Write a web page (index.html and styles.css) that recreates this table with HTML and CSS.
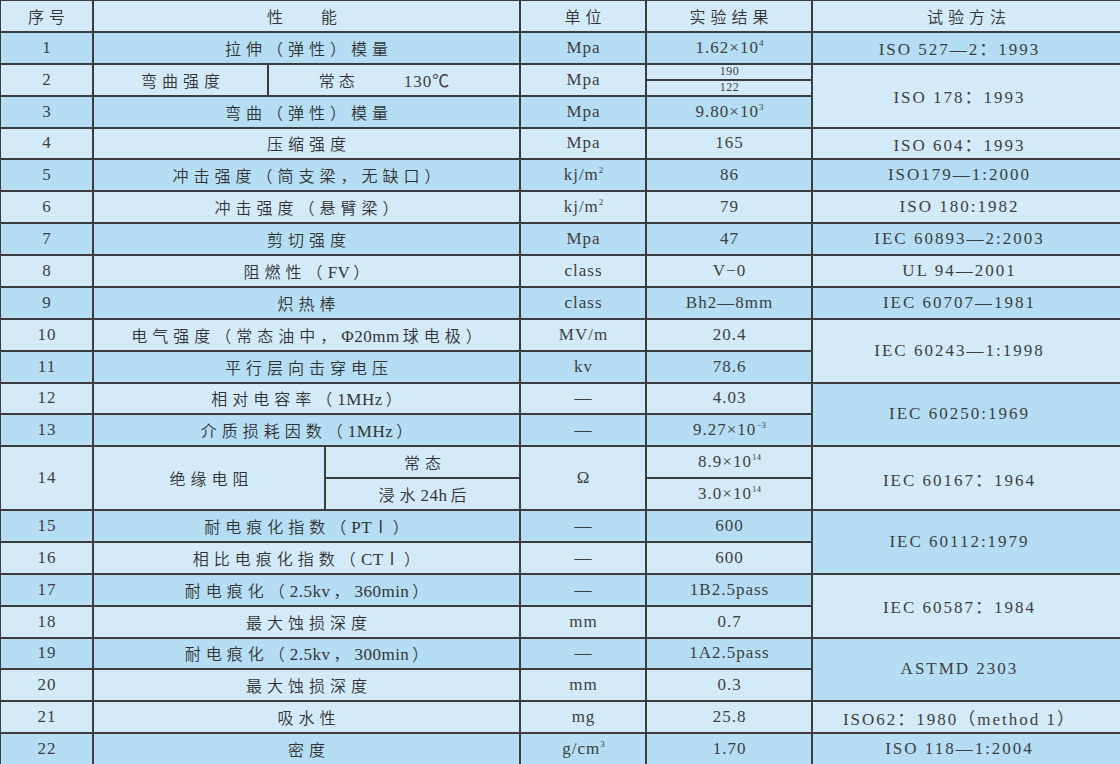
FILE: index.html
```html
<!DOCTYPE html>
<html lang="zh-CN">
<head>
<meta charset="utf-8">
<title>性能表</title>
<link rel="stylesheet" href="styles.css">
</head>
<body>
<div class="sheet">
  <!-- header -->
  <div class="cn">序号</div>
  <div class="cn c3 wide">性　　能</div>
  <div class="cn">单位</div>
  <div class="cn">实验结果</div>
  <div class="cn">试验方法</div>

  <!-- 1 -->
  <div class="d">1</div>
  <div class="d cn c3">拉伸（弹性）模量</div>
  <div class="d">Mpa</div>
  <div class="d"><span>1.62×10<sup>4</sup></span></div>
  <div class="d m">ISO 527—2：1993</div>

  <!-- 2 -->
  <div>2</div>
  <div class="cn">弯曲强度</div>
  <div class="c2 pair"><span class="cn">常态</span><span>130℃</span></div>
  <div>Mpa</div>
  <div class="half">190</div>
  <div class="r4 m">ISO 178：1993</div>
  <div class="half">122</div>

  <!-- 3 -->
  <div class="d">3</div>
  <div class="d cn c3">弯曲（弹性）模量</div>
  <div class="d">Mpa</div>
  <div class="d"><span>9.80×10<sup>3</sup></span></div>

  <!-- 4 -->
  <div>4</div>
  <div class="cn c3">压缩强度</div>
  <div>Mpa</div>
  <div>165</div>
  <div class="m">ISO 604：1993</div>

  <!-- 5 -->
  <div class="d">5</div>
  <div class="d cn c3">冲击强度（简支梁，无缺口）</div>
  <div class="d"><span>kj/m<sup>2</sup></span></div>
  <div class="d">86</div>
  <div class="d m">ISO179—1:2000</div>

  <!-- 6 -->
  <div>6</div>
  <div class="cn c3">冲击强度（悬臂梁）</div>
  <div><span>kj/m<sup>2</sup></span></div>
  <div>79</div>
  <div class="m">ISO 180:1982</div>

  <!-- 7 -->
  <div class="d">7</div>
  <div class="d cn c3">剪切强度</div>
  <div class="d">Mpa</div>
  <div class="d">47</div>
  <div class="d m">IEC 60893—2:2003</div>

  <!-- 8 -->
  <div>8</div>
  <div class="cn c3"><span>阻燃性（<span class="lt">FV</span>）</span></div>
  <div>class</div>
  <div>V−0</div>
  <div class="m">UL 94—2001</div>

  <!-- 9 -->
  <div class="d">9</div>
  <div class="d cn c3">炽热棒</div>
  <div class="d">class</div>
  <div class="d">Bh2—8mm</div>
  <div class="d m">IEC 60707—1981</div>

  <!-- 10 -->
  <div>10</div>
  <div class="cn c3"><span>电气强度（常态油中，<span class="lt">Φ20mm</span>球电极）</span></div>
  <div>MV/m</div>
  <div>20.4</div>
  <div class="r4 m">IEC 60243—1:1998</div>

  <!-- 11 -->
  <div class="d">11</div>
  <div class="d cn c3">平行层向击穿电压</div>
  <div class="d">kv</div>
  <div class="d">78.6</div>

  <!-- 12 -->
  <div>12</div>
  <div class="cn c3"><span>相对电容率（<span class="lt">1MHz</span>）</span></div>
  <div>—</div>
  <div>4.03</div>
  <div class="d r4 m">IEC 60250:1969</div>

  <!-- 13 -->
  <div class="d">13</div>
  <div class="d cn c3"><span>介质损耗因数（<span class="lt">1MHz</span>）</span></div>
  <div class="d">—</div>
  <div class="d"><span>9.27×10<sup>−3</sup></span></div>

  <!-- 14 -->
  <div class="r4">14</div>
  <div class="cn c2 r4">绝缘电阻</div>
  <div class="cn">常态</div>
  <div class="r4">Ω</div>
  <div><span>8.9×10<sup>14</sup></span></div>
  <div class="r4 m">IEC 60167：1964</div>
  <div class="cn"><span>浸水<span class="lt">24h</span>后</span></div>
  <div><span>3.0×10<sup>14</sup></span></div>

  <!-- 15 -->
  <div class="d">15</div>
  <div class="d cn c3"><span>耐电痕化指数（<span class="lt">PTⅠ</span>）</span></div>
  <div class="d">—</div>
  <div class="d">600</div>
  <div class="d r4 m">IEC 60112:1979</div>

  <!-- 16 -->
  <div>16</div>
  <div class="cn c3"><span>相比电痕化指数（<span class="lt">CTⅠ</span>）</span></div>
  <div>—</div>
  <div>600</div>

  <!-- 17 -->
  <div class="d">17</div>
  <div class="d cn c3"><span>耐电痕化（<span class="lt">2.5kv</span>，<span class="lt">360min</span>）</span></div>
  <div class="d">—</div>
  <div class="d">1B2.5pass</div>
  <div class="r4 m">IEC 60587：1984</div>

  <!-- 18 -->
  <div>18</div>
  <div class="cn c3">最大蚀损深度</div>
  <div>mm</div>
  <div>0.7</div>

  <!-- 19 -->
  <div class="d">19</div>
  <div class="d cn c3"><span>耐电痕化（<span class="lt">2.5kv</span>，<span class="lt">300min</span>）</span></div>
  <div class="d">—</div>
  <div class="d">1A2.5pass</div>
  <div class="d r4 m">ASTMD 2303</div>

  <!-- 20 -->
  <div>20</div>
  <div class="cn c3">最大蚀损深度</div>
  <div>mm</div>
  <div>0.3</div>

  <!-- 21 -->
  <div>21</div>
  <div class="cn c3">吸水性</div>
  <div>mg</div>
  <div>25.8</div>
  <div class="m">ISO62：1980（method 1）</div>

  <!-- 22 -->
  <div class="d">22</div>
  <div class="d cn c3">密度</div>
  <div class="d"><span>g/cm<sup>3</sup></span></div>
  <div class="d">1.70</div>
  <div class="d m">ISO 118—1:2004</div>
</div>
</body>
</html>
```
FILE: styles.css
```css
html, body {
  margin: 0;
  padding: 0;
  background: #d3ebf9;
}

.sheet {
  box-sizing: border-box;
  width: 1120px;
  height: 764px;
  padding: 1px 0 0 1px;
  background: #3d3d3d;
  display: grid;
  grid-template-columns: 91px 173px 55px 193px 124px 164px 1fr;
  grid-template-rows: repeat(48, 1fr);
  gap: 2px;
  overflow: hidden;
  font-family: "Liberation Serif", "Noto Sans CJK SC", serif;
  font-size: 17px;
  color: #3e3e3e;
  letter-spacing: 1px;
}

.sheet > div {
  grid-row: span 2;
  background: #d3ebf9;
  display: flex;
  align-items: center;
  justify-content: center;
  white-space: nowrap;
  padding-left: 1px;
  min-width: 0;
  min-height: 0;
}

.sheet > div.d {
  background: #b5ddf4;
}

.sheet > div.c2 { grid-column: span 2; }
.sheet > div.c3 { grid-column: span 3; }
.sheet > div.r4 { grid-row: span 4; }

.sheet > div.m {
  letter-spacing: 2px;
  padding-left: 2px;
  padding-right: 16px;
}

.sheet > div.half {
  grid-row: span 1;
  font-size: 12px;
  letter-spacing: 0.5px;
}

.cn {
  font-family: "Liberation Serif", "Noto Sans CJK SC", serif;
  font-weight: 350;
  font-size: 16px;
  letter-spacing: 5px;
  color: #333333;
}

.sheet > div.cn {
  padding-left: 5px;
}

.lt {
  font-size: 17px;
  letter-spacing: 0.5px;
  margin-right: 3px;
}

.sheet > div.wide {
  letter-spacing: 2px;
  padding-right: 12px;
}

.pair {
  gap: 45px;
  padding-right: 20px;
}

.pair .cn {
  letter-spacing: 4px;
}

sup {
  font-size: 9px;
  line-height: 0;
  vertical-align: 7px;
  letter-spacing: 0;
}
```
